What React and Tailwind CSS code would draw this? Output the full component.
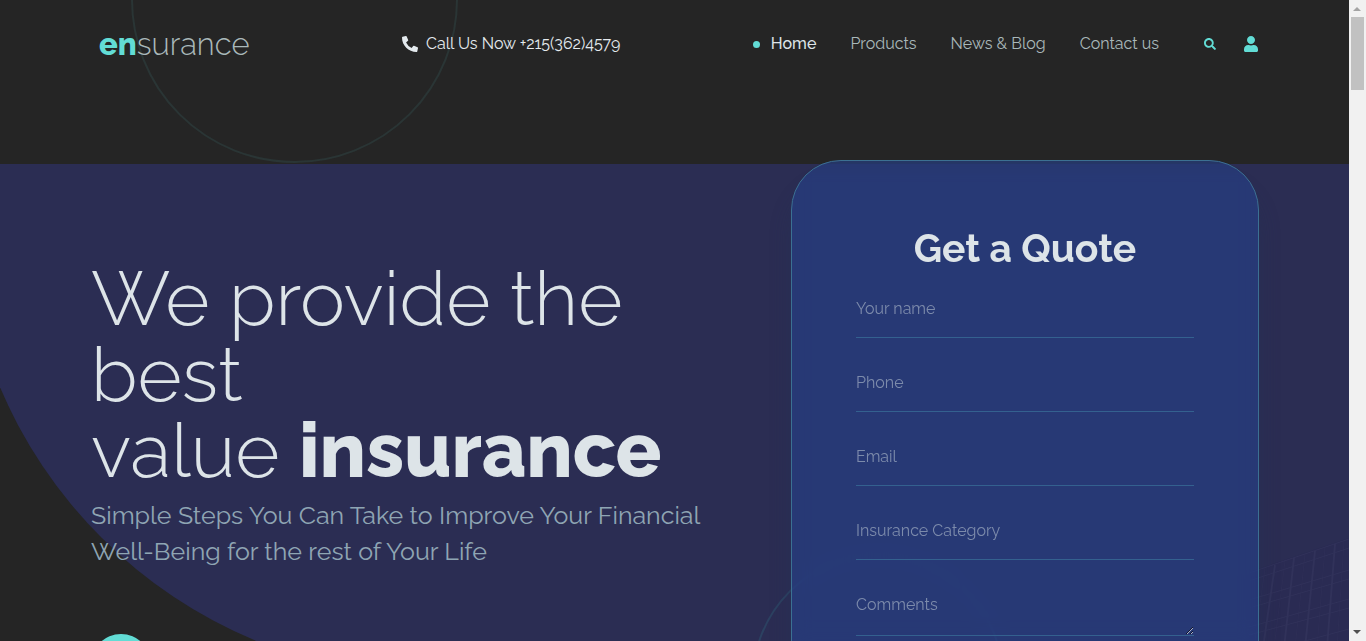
import React from "react";
import { FaPhoneAlt, FaSearch, FaUser, FaPlay } from "react-icons/fa";

const links = ["Products", "News & Blog", "Contact us"];
const fields = [
  { id: "name", label: "Your name", type: "text" },
  { id: "phone", label: "Phone", type: "tel" },
  { id: "email", label: "Email", type: "email" },
  { id: "category", label: "Insurance Category", type: "text" },
];

function Header() {
  return (
    <header className="relative flex h-[164px] items-start px-[91px] pt-6 text-base leading-10 text-[#a9b8ba]">
      <a href="#" className="w-[311px] pl-2 text-[31px] font-light leading-10">
        <span className="font-extrabold text-[#62dcd5]">en</span>surance
      </a>
      <a href="tel:+2153624579" className="flex items-center gap-2 whitespace-nowrap text-[#e4eaee]">
        <FaPhoneAlt className="size-4" />
        Call Us Now +215(362)4579
      </a>
      <nav className="ml-auto flex items-center gap-[34px] whitespace-nowrap">
        <a href="#" className="flex items-center gap-[11px] font-medium text-[#dde4e8]">
          <span className="size-[7px] rounded-full bg-[#62dcd5]" />
          Home
        </a>
        {links.map((l) => (
          <a key={l} href="#">{l}</a>
        ))}
      </nav>
      <div className="ml-[45px] flex h-10 items-center gap-7 text-[#62dcd5]">
        <button type="button" aria-label="Search"><FaSearch className="size-3" /></button>
        <button type="button" aria-label="Account"><FaUser className="h-4 w-[14px]" /></button>
      </div>
    </header>
  );
}

function Building() {
  return (
    <svg className="absolute right-0 top-[374px] h-[110px] w-[100px]" viewBox="0 0 100 110" fill="none" stroke="#33345c" aria-hidden="true">
      <path d="M0 34 100 0V110H0Z" fill="#2a2b53" stroke="none" />
      <g strokeWidth="1" opacity=".8">
        <path d="M0 35 100 1M0 43 100 10M0 62 100 32M0 70 100 41M0 89 100 61M0 97 100 70M30 110 100 91" />
        <path d="M26 27 14 110M45 20 35 110M66 13 56 110M86 6 78 110" strokeWidth="2" />
        <path d="M16 30 5 110M36 23 25 110M56 16 46 110M76 9 68 110M95 3 88 110" opacity=".5" />
      </g>
    </svg>
  );
}

function QuoteForm() {
  return (
    <form className="relative mt-[-4px] w-[468px] shrink-0 rounded-[50px] border border-[#3c7092] bg-[#234ba9]/40 px-16 pb-16 pt-[59px] shadow-[0_24px_20px_#24325666] backdrop-blur-[10px]">
      <h2 className="text-center text-[39px] font-bold leading-[56px] text-[#dde4e8]">Get a Quote</h2>
      <div className="mt-[3px] flex flex-col gap-[15px]">
        {fields.map((f) => (
          <input key={f.id} id={f.id} type={f.type} aria-label={f.label} placeholder={f.label}
            className="h-[59px] w-full border-b border-[#34618f] bg-transparent text-base text-white outline-none placeholder:text-[#7c8bab]" />
        ))}
        <textarea id="comments" aria-label="Comments" placeholder="Comments"
          className="block h-[61px] w-full resize overflow-hidden border-b border-[#34618f] bg-transparent pt-[18px] text-base text-white outline-none placeholder:text-[#7c8bab]" />
      </div>
      <button type="submit" className="mt-10 h-14 w-full rounded-full bg-[#62dcd5] text-base text-[#252525]">Send</button>
    </form>
  );
}

function Scrollbar() {
  return (
    <div className="flex w-[17px] shrink-0 flex-col items-center bg-[#f1f1f1]" aria-hidden="true">
      <svg className="h-[17px] w-[17px]" viewBox="0 0 17 17"><path d="M4 11h8L8 7Z" fill="#a3a3a3" /></svg>
      <div className="h-[73px] w-[13px] bg-[#c1c1c1]" />
      <svg className="mt-auto h-[17px] w-[17px]" viewBox="0 0 17 17"><path d="M4 6h8L8 10Z" fill="#505050" /></svg>
    </div>
  );
}

export default function App() {
  return (
    <div className="flex h-screen overflow-hidden bg-[#252525] font-['Raleway','Lato',sans-serif]">
      <div className="relative min-w-0 flex-1 overflow-hidden">
        <div className="absolute left-[131px] top-[-164px] size-[327px] rounded-full border-2 border-[#2a3535]" />
        <Header />
        <main className="relative flex items-start justify-between pl-[91px] pr-[90px]">
          <div className="absolute -left-[38px] right-0 top-0 h-[513px] rounded-bl-[476px] bg-[#2b2d53]" />
          <Building />
          <div className="absolute left-[752px] top-[390px] size-[252px] rounded-full border-2 border-[#2c4161]" />
          <section className="relative w-[620px] pt-[97px]">
            <h1 className="text-[76px] font-light leading-[76px] text-[#dde4e8]">
              We provide the best<br />value <strong className="font-extrabold">insurance</strong>
            </h1>
            <p className="mt-2 text-[25px] leading-9 text-[#8fa5b3]">
              Simple Steps You Can Take to Improve Your Financial Well-Being for the rest of Your Life
            </p>
            <button type="button" aria-label="Play video" className="mt-[65px] flex size-[60px] items-center justify-center rounded-full bg-[#62dcd5] text-[#252525]">
              <FaPlay className="size-4" />
            </button>
          </section>
          <QuoteForm />
        </main>
      </div>
      <Scrollbar />
    </div>
  );
}
